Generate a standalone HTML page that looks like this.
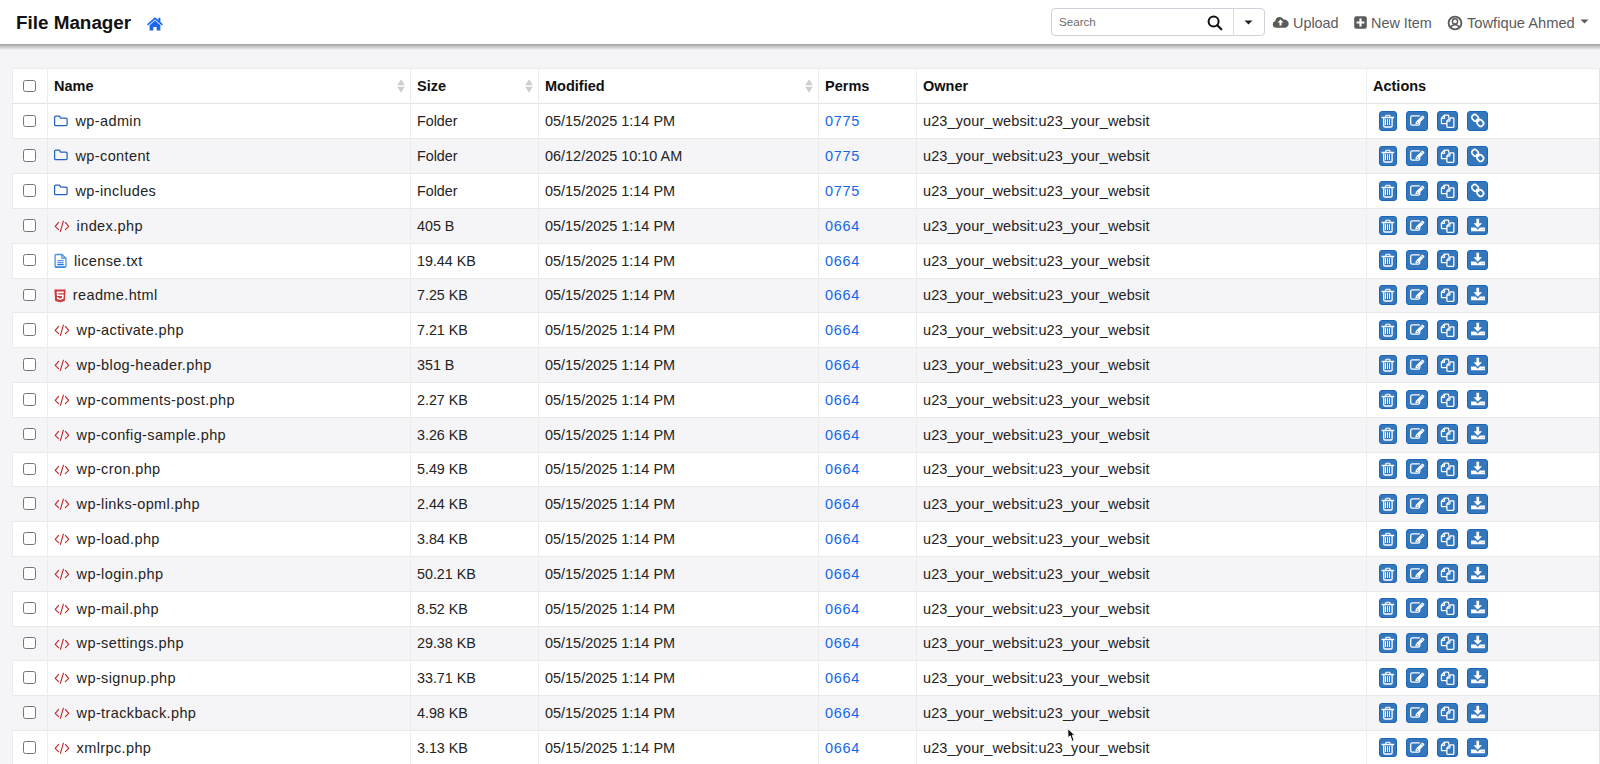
<!DOCTYPE html>
<html><head><meta charset="utf-8"><title>File Manager</title>
<style>
*{box-sizing:border-box;margin:0;padding:0}
html,body{width:1600px;height:764px;overflow:hidden}
body{background:#f5f5f7;font-family:"Liberation Sans",sans-serif;color:#232323;position:relative}
#hdr{position:absolute;left:0;top:0;width:1600px;height:44px;background:#fff}
#shd{position:absolute;left:0;top:44px;width:1600px;height:6px;background:linear-gradient(#a0a0a0,#b8b8b8 30%,#d8d8d8 65%,#f0f0f2)}
.title{position:absolute;left:16px;top:11.6px;font-size:18.85px;font-weight:bold;color:#111;line-height:22px;white-space:nowrap}
.nav{position:absolute;top:13px;font-size:14.4px;color:#5b5b5b;line-height:20px;white-space:nowrap}
#search{position:absolute;left:1051px;top:8px;width:214px;height:28px;border:1px solid #cdd3da;border-radius:4px;background:#fff}
#search .ph{position:absolute;left:7px;top:6px;font-size:11.6px;color:#6c6c6c;line-height:14px}
#search .dv{position:absolute;left:181px;top:0;width:1px;height:26px;background:#dcdfe3}
#tbl{position:absolute;left:12px;top:68px;width:1588px;height:700px;background:#fff;border:1px solid #ebebeb;border-right:1px solid #e2e2e2}
.row{position:absolute;left:12px;width:1587px;overflow:hidden}
.stp{position:absolute;left:12px;width:1587px;background:#f5f5f7}
.c{position:absolute;top:0.9px;white-space:nowrap;font-size:14.5px}
.nm{letter-spacing:0.38px}
.sz{font-size:14.3px}
.dt{font-size:14.45px}
.ow{letter-spacing:0.11px}
.th{font-weight:bold;color:#111}
.vl{position:absolute;top:68px;width:1px;height:700px;background:#ededed}
.hl{position:absolute;left:12px;width:1587px;height:1px;background:#e9e9e9}
.cb{position:absolute;left:11.3px;width:12.8px;height:12.8px;border:1px solid #767676;border-radius:2.5px;background:#fff}
.fi{position:absolute;left:38px;top:8px}
.bt{position:absolute;top:7.8px;height:19.7px;background:#3577bd;border:1px solid #1c66b6;border-radius:3px}
.bt svg{position:absolute;left:-1px;top:-1px}
.perm{color:#1467e8;letter-spacing:0.7px}
.sort{position:absolute;top:10.5px;width:8px;height:14px}.sort svg{display:block}
</style></head><body>
<div id="hdr"></div><div id="shd"></div>
<div class="title">File Manager</div>
<svg style="position:absolute;left:146px;top:16px" width="18" height="15" viewBox="0 0 18 15"><path d="M9 1.2L1 8.2l1.1 1.2L9 3.4l6.9 6 1.1-1.2-2.6-2.3V1.7h-2v2.4z" fill="#1b66f0"/><path d="M3.6 9.3L9 4.6l5.4 4.7v5.1H10.7v-3.5H7.3v3.5H3.6z" fill="#1b66f0"/></svg>
<div id="search"><div class="ph">Search</div>
<svg style="position:absolute;left:155px;top:6px" width="16" height="16" viewBox="0 0 16 16"><circle cx="6.6" cy="6.6" r="5" fill="none" stroke="#111" stroke-width="2"/><path d="M10.3 10.3l4 4" stroke="#111" stroke-width="2.2" stroke-linecap="round"/></svg>
<div class="dv"></div>
<svg style="position:absolute;left:192px;top:11px" width="9" height="5" viewBox="0 0 9 5"><path d="M0.5 0.5h8L4.5 4.6z" fill="#222"/></svg>
</div>
<svg style="position:absolute;left:1272px;top:15px" width="17" height="14" viewBox="0 0 17 14"><path d="M4 12.8a3.4 3.4 0 0 1-0.6-6.7A4.3 4.3 0 0 1 11.6 4.5a3.8 3.8 0 0 1 1.6 8.3z" fill="#5b5b5b"/><path d="M8.5 4.6l-3 3h2v3h2v-3h2z" fill="#fff"/></svg>
<div class="nav" style="left:1293px">Upload</div>
<svg style="position:absolute;left:1354px;top:16px" width="13" height="13" viewBox="0 0 13 13"><rect x="0.2" y="0.2" width="12.6" height="12.6" rx="2" fill="#5b5b5b"/><path d="M6.5 2.6v7.8M2.6 6.5h7.8" stroke="#fff" stroke-width="2.2"/></svg>
<div class="nav" style="left:1371px">New Item</div>
<svg style="position:absolute;left:1447px;top:15px" width="16" height="16" viewBox="0 0 16 16"><circle cx="8" cy="8" r="6.4" fill="none" stroke="#5b5b5b" stroke-width="1.9"/><circle cx="8" cy="6.4" r="2.6" fill="none" stroke="#5b5b5b" stroke-width="1.5"/><path d="M3.6 12.6c1-2 2.6-2.8 4.4-2.8s3.4 0.8 4.4 2.8" fill="none" stroke="#5b5b5b" stroke-width="1.5"/></svg>
<div class="nav" style="left:1467px;font-size:14.7px">Towfique Ahmed</div>
<svg style="position:absolute;left:1580px;top:19px" width="9" height="5" viewBox="0 0 9 5"><path d="M0.5 0.5h8L4.5 4.6z" fill="#5b5b5b"/></svg>
<div id="tbl"></div>

<div class="stp" style="top:139px;height:34px"></div>
<div class="stp" style="top:209px;height:34px"></div>
<div class="stp" style="top:279px;height:33px"></div>
<div class="stp" style="top:348px;height:34px"></div>
<div class="stp" style="top:418px;height:34px"></div>
<div class="stp" style="top:487px;height:34px"></div>
<div class="stp" style="top:557px;height:34px"></div>
<div class="stp" style="top:627px;height:33px"></div>
<div class="stp" style="top:696px;height:34px"></div>
<div class="row" style="top:68.5px;height:35px;line-height:35px">
<div class="cb" style="top:11.2px"></div>
<div class="c th" style="left:42px">Name</div>
<div class="c th" style="left:405px">Size</div>
<div class="c th" style="left:533px">Modified</div>
<div class="c th" style="left:813px">Perms</div>
<div class="c th" style="left:911px">Owner</div>
<div class="c th" style="left:1361px">Actions</div>
<div class="sort" style="left:385px"><svg width="8" height="14" viewBox="0 0 8 14"><path d="M4 0.3L7.7 6.3H0.3z" fill="#cdcdcd"/><path d="M4 13.7L7.7 7.7H0.3z" fill="#cdcdcd"/></svg></div>
<div class="sort" style="left:513px"><svg width="8" height="14" viewBox="0 0 8 14"><path d="M4 0.3L7.7 6.3H0.3z" fill="#cdcdcd"/><path d="M4 13.7L7.7 7.7H0.3z" fill="#cdcdcd"/></svg></div>
<div class="sort" style="left:793px"><svg width="8" height="14" viewBox="0 0 8 14"><path d="M4 0.3L7.7 6.3H0.3z" fill="#cdcdcd"/><path d="M4 13.7L7.7 7.7H0.3z" fill="#cdcdcd"/></svg></div>
</div>
<div class="row" style="top:103.50px;height:34.8px;line-height:34.8px">
<div class="cb" style="top:11px"></div>
<svg class="fi" width="24" height="20" viewBox="0 0 24 20"><path d="M5.8 4H9.5l1.1 2.1H16a1.1 1.1 0 0 1 1.1 1.1v5.4a1.1 1.1 0 0 1-1.1 1.1H5.7a1.1 1.1 0 0 1-1.1-1.1V5.2A1.2 1.2 0 0 1 5.8 4z" fill="none" stroke="#2561c0" stroke-width="1.25" stroke-linejoin="round"/></svg>
<div class="c nm" style="left:63.5px">wp-admin</div>
<div class="c sz" style="left:405px">Folder</div>
<div class="c dt" style="left:533px">05/15/2025 1:14 PM</div>
<div class="c perm" style="left:813px">0775</div>
<div class="c ow" style="left:911px">u23_your_websit:u23_your_websit</div>
<div class="bt" style="left:1367px;width:18px"><svg width="18" height="20" viewBox="0 0 18 20"><path d="M6.7 6.2V5.1a0.8 0.8 0 0 1 0.8-0.8h2.7a0.8 0.8 0 0 1 0.8 0.8v1.1" fill="none" stroke="#fff" stroke-width="1.1"/><path d="M3.1 6.5H14.6" stroke="#fff" stroke-width="1.4" stroke-linecap="round"/><path d="M4.75 7V14.8a1.2 1.2 0 0 0 1.2 1.2H11.9a1.2 1.2 0 0 0 1.2-1.2V7" fill="none" stroke="#fff" stroke-width="1.3"/><path d="M6.5 8.2V14M8.5 8.2V14M10.5 8.2V14" stroke="#fff" stroke-width="1.0"/></svg></div>
<div class="bt" style="left:1394px;width:22px"><svg width="22" height="20" viewBox="0 0 22 20"><path d="M13.4 4.85H6.3a1.6 1.6 0 0 0-1.6 1.6V12.5a1.6 1.6 0 0 0 1.6 1.6H12.2a1.6 1.6 0 0 0 1.6-1.6V11.6" fill="none" stroke="#fff" stroke-width="1.3" stroke-linecap="round"/><path d="M9.3 13.2L9.9 10.7 15.7 4.9a1 1 0 0 1 1.4 0l1 1a1 1 0 0 1 0 1.4L12.3 13.1z" fill="#fff"/><path d="M10.7 10.8l1.6 1.6M15.5 6.1l1.5 1.5" stroke="#3577bd" stroke-width="0.7"/></svg></div>
<div class="bt" style="left:1425px;width:21px"><svg width="21" height="20" viewBox="0 0 21 20"><path d="M9.9 12.65H5.25a0.8 0.8 0 0 1-0.8-0.8V7.2L7.6 4.05H10.8a0.8 0.8 0 0 1 0.8 0.8V6.85" fill="none" stroke="#fff" stroke-width="1.3" stroke-linejoin="round"/><path d="M7.6 4.2V6.9a0.5 0.5 0 0 1-0.5 0.5H4.55" fill="none" stroke="#fff" stroke-width="1.1"/><path d="M13 6.85H16.05a0.8 0.8 0 0 1 0.8 0.8V15.5a0.8 0.8 0 0 1-0.8 0.8H10.7a0.8 0.8 0 0 1-0.8-0.8V10z" fill="none" stroke="#fff" stroke-width="1.3" stroke-linejoin="round"/><path d="M13 7V9.6a0.5 0.5 0 0 1-0.5 0.5H10" fill="none" stroke="#fff" stroke-width="1.1"/></svg></div>
<div class="bt" style="left:1455px;width:21px"><svg width="21" height="20" viewBox="0 0 21 20"><g transform="rotate(-45 10.7 9.4)"><rect x="7.9" y="2.4" width="5.6" height="6.6" rx="2.5" fill="none" stroke="#fff" stroke-width="1.7"/><rect x="7.9" y="9.8" width="5.6" height="6.6" rx="2.5" fill="none" stroke="#fff" stroke-width="1.7"/><path d="M10.7 7.4V11.4" stroke="#fff" stroke-width="1.5"/></g></svg></div>
</div>
<div class="row s" style="top:138.30px;height:34.8px;line-height:34.8px">
<div class="cb" style="top:11px"></div>
<svg class="fi" width="24" height="20" viewBox="0 0 24 20"><path d="M5.8 4H9.5l1.1 2.1H16a1.1 1.1 0 0 1 1.1 1.1v5.4a1.1 1.1 0 0 1-1.1 1.1H5.7a1.1 1.1 0 0 1-1.1-1.1V5.2A1.2 1.2 0 0 1 5.8 4z" fill="none" stroke="#2561c0" stroke-width="1.25" stroke-linejoin="round"/></svg>
<div class="c nm" style="left:63.5px">wp-content</div>
<div class="c sz" style="left:405px">Folder</div>
<div class="c dt" style="left:533px">06/12/2025 10:10 AM</div>
<div class="c perm" style="left:813px">0775</div>
<div class="c ow" style="left:911px">u23_your_websit:u23_your_websit</div>
<div class="bt" style="left:1367px;width:18px"><svg width="18" height="20" viewBox="0 0 18 20"><path d="M6.7 6.2V5.1a0.8 0.8 0 0 1 0.8-0.8h2.7a0.8 0.8 0 0 1 0.8 0.8v1.1" fill="none" stroke="#fff" stroke-width="1.1"/><path d="M3.1 6.5H14.6" stroke="#fff" stroke-width="1.4" stroke-linecap="round"/><path d="M4.75 7V14.8a1.2 1.2 0 0 0 1.2 1.2H11.9a1.2 1.2 0 0 0 1.2-1.2V7" fill="none" stroke="#fff" stroke-width="1.3"/><path d="M6.5 8.2V14M8.5 8.2V14M10.5 8.2V14" stroke="#fff" stroke-width="1.0"/></svg></div>
<div class="bt" style="left:1394px;width:22px"><svg width="22" height="20" viewBox="0 0 22 20"><path d="M13.4 4.85H6.3a1.6 1.6 0 0 0-1.6 1.6V12.5a1.6 1.6 0 0 0 1.6 1.6H12.2a1.6 1.6 0 0 0 1.6-1.6V11.6" fill="none" stroke="#fff" stroke-width="1.3" stroke-linecap="round"/><path d="M9.3 13.2L9.9 10.7 15.7 4.9a1 1 0 0 1 1.4 0l1 1a1 1 0 0 1 0 1.4L12.3 13.1z" fill="#fff"/><path d="M10.7 10.8l1.6 1.6M15.5 6.1l1.5 1.5" stroke="#3577bd" stroke-width="0.7"/></svg></div>
<div class="bt" style="left:1425px;width:21px"><svg width="21" height="20" viewBox="0 0 21 20"><path d="M9.9 12.65H5.25a0.8 0.8 0 0 1-0.8-0.8V7.2L7.6 4.05H10.8a0.8 0.8 0 0 1 0.8 0.8V6.85" fill="none" stroke="#fff" stroke-width="1.3" stroke-linejoin="round"/><path d="M7.6 4.2V6.9a0.5 0.5 0 0 1-0.5 0.5H4.55" fill="none" stroke="#fff" stroke-width="1.1"/><path d="M13 6.85H16.05a0.8 0.8 0 0 1 0.8 0.8V15.5a0.8 0.8 0 0 1-0.8 0.8H10.7a0.8 0.8 0 0 1-0.8-0.8V10z" fill="none" stroke="#fff" stroke-width="1.3" stroke-linejoin="round"/><path d="M13 7V9.6a0.5 0.5 0 0 1-0.5 0.5H10" fill="none" stroke="#fff" stroke-width="1.1"/></svg></div>
<div class="bt" style="left:1455px;width:21px"><svg width="21" height="20" viewBox="0 0 21 20"><g transform="rotate(-45 10.7 9.4)"><rect x="7.9" y="2.4" width="5.6" height="6.6" rx="2.5" fill="none" stroke="#fff" stroke-width="1.7"/><rect x="7.9" y="9.8" width="5.6" height="6.6" rx="2.5" fill="none" stroke="#fff" stroke-width="1.7"/><path d="M10.7 7.4V11.4" stroke="#fff" stroke-width="1.5"/></g></svg></div>
</div>
<div class="row" style="top:173.10px;height:34.8px;line-height:34.8px">
<div class="cb" style="top:11px"></div>
<svg class="fi" width="24" height="20" viewBox="0 0 24 20"><path d="M5.8 4H9.5l1.1 2.1H16a1.1 1.1 0 0 1 1.1 1.1v5.4a1.1 1.1 0 0 1-1.1 1.1H5.7a1.1 1.1 0 0 1-1.1-1.1V5.2A1.2 1.2 0 0 1 5.8 4z" fill="none" stroke="#2561c0" stroke-width="1.25" stroke-linejoin="round"/></svg>
<div class="c nm" style="left:63.5px">wp-includes</div>
<div class="c sz" style="left:405px">Folder</div>
<div class="c dt" style="left:533px">05/15/2025 1:14 PM</div>
<div class="c perm" style="left:813px">0775</div>
<div class="c ow" style="left:911px">u23_your_websit:u23_your_websit</div>
<div class="bt" style="left:1367px;width:18px"><svg width="18" height="20" viewBox="0 0 18 20"><path d="M6.7 6.2V5.1a0.8 0.8 0 0 1 0.8-0.8h2.7a0.8 0.8 0 0 1 0.8 0.8v1.1" fill="none" stroke="#fff" stroke-width="1.1"/><path d="M3.1 6.5H14.6" stroke="#fff" stroke-width="1.4" stroke-linecap="round"/><path d="M4.75 7V14.8a1.2 1.2 0 0 0 1.2 1.2H11.9a1.2 1.2 0 0 0 1.2-1.2V7" fill="none" stroke="#fff" stroke-width="1.3"/><path d="M6.5 8.2V14M8.5 8.2V14M10.5 8.2V14" stroke="#fff" stroke-width="1.0"/></svg></div>
<div class="bt" style="left:1394px;width:22px"><svg width="22" height="20" viewBox="0 0 22 20"><path d="M13.4 4.85H6.3a1.6 1.6 0 0 0-1.6 1.6V12.5a1.6 1.6 0 0 0 1.6 1.6H12.2a1.6 1.6 0 0 0 1.6-1.6V11.6" fill="none" stroke="#fff" stroke-width="1.3" stroke-linecap="round"/><path d="M9.3 13.2L9.9 10.7 15.7 4.9a1 1 0 0 1 1.4 0l1 1a1 1 0 0 1 0 1.4L12.3 13.1z" fill="#fff"/><path d="M10.7 10.8l1.6 1.6M15.5 6.1l1.5 1.5" stroke="#3577bd" stroke-width="0.7"/></svg></div>
<div class="bt" style="left:1425px;width:21px"><svg width="21" height="20" viewBox="0 0 21 20"><path d="M9.9 12.65H5.25a0.8 0.8 0 0 1-0.8-0.8V7.2L7.6 4.05H10.8a0.8 0.8 0 0 1 0.8 0.8V6.85" fill="none" stroke="#fff" stroke-width="1.3" stroke-linejoin="round"/><path d="M7.6 4.2V6.9a0.5 0.5 0 0 1-0.5 0.5H4.55" fill="none" stroke="#fff" stroke-width="1.1"/><path d="M13 6.85H16.05a0.8 0.8 0 0 1 0.8 0.8V15.5a0.8 0.8 0 0 1-0.8 0.8H10.7a0.8 0.8 0 0 1-0.8-0.8V10z" fill="none" stroke="#fff" stroke-width="1.3" stroke-linejoin="round"/><path d="M13 7V9.6a0.5 0.5 0 0 1-0.5 0.5H10" fill="none" stroke="#fff" stroke-width="1.1"/></svg></div>
<div class="bt" style="left:1455px;width:21px"><svg width="21" height="20" viewBox="0 0 21 20"><g transform="rotate(-45 10.7 9.4)"><rect x="7.9" y="2.4" width="5.6" height="6.6" rx="2.5" fill="none" stroke="#fff" stroke-width="1.7"/><rect x="7.9" y="9.8" width="5.6" height="6.6" rx="2.5" fill="none" stroke="#fff" stroke-width="1.7"/><path d="M10.7 7.4V11.4" stroke="#fff" stroke-width="1.5"/></g></svg></div>
</div>
<div class="row s" style="top:207.90px;height:34.8px;line-height:34.8px">
<div class="cb" style="top:11px"></div>
<svg class="fi" width="24" height="20" viewBox="0 0 24 20"><path d="M8.6 6.45L5.2 10.3 8.5 13.65M15.4 6.45L18.7 10.4 15.4 13.65M13.4 5.2L10.4 15.4" fill="none" stroke="#c02a2f" stroke-width="1.15" stroke-linecap="round" stroke-linejoin="round"/></svg>
<div class="c nm" style="left:64.6px">index.php</div>
<div class="c sz" style="left:405px">405 B</div>
<div class="c dt" style="left:533px">05/15/2025 1:14 PM</div>
<div class="c perm" style="left:813px">0664</div>
<div class="c ow" style="left:911px">u23_your_websit:u23_your_websit</div>
<div class="bt" style="left:1367px;width:18px"><svg width="18" height="20" viewBox="0 0 18 20"><path d="M6.7 6.2V5.1a0.8 0.8 0 0 1 0.8-0.8h2.7a0.8 0.8 0 0 1 0.8 0.8v1.1" fill="none" stroke="#fff" stroke-width="1.1"/><path d="M3.1 6.5H14.6" stroke="#fff" stroke-width="1.4" stroke-linecap="round"/><path d="M4.75 7V14.8a1.2 1.2 0 0 0 1.2 1.2H11.9a1.2 1.2 0 0 0 1.2-1.2V7" fill="none" stroke="#fff" stroke-width="1.3"/><path d="M6.5 8.2V14M8.5 8.2V14M10.5 8.2V14" stroke="#fff" stroke-width="1.0"/></svg></div>
<div class="bt" style="left:1394px;width:22px"><svg width="22" height="20" viewBox="0 0 22 20"><path d="M13.4 4.85H6.3a1.6 1.6 0 0 0-1.6 1.6V12.5a1.6 1.6 0 0 0 1.6 1.6H12.2a1.6 1.6 0 0 0 1.6-1.6V11.6" fill="none" stroke="#fff" stroke-width="1.3" stroke-linecap="round"/><path d="M9.3 13.2L9.9 10.7 15.7 4.9a1 1 0 0 1 1.4 0l1 1a1 1 0 0 1 0 1.4L12.3 13.1z" fill="#fff"/><path d="M10.7 10.8l1.6 1.6M15.5 6.1l1.5 1.5" stroke="#3577bd" stroke-width="0.7"/></svg></div>
<div class="bt" style="left:1425px;width:21px"><svg width="21" height="20" viewBox="0 0 21 20"><path d="M9.9 12.65H5.25a0.8 0.8 0 0 1-0.8-0.8V7.2L7.6 4.05H10.8a0.8 0.8 0 0 1 0.8 0.8V6.85" fill="none" stroke="#fff" stroke-width="1.3" stroke-linejoin="round"/><path d="M7.6 4.2V6.9a0.5 0.5 0 0 1-0.5 0.5H4.55" fill="none" stroke="#fff" stroke-width="1.1"/><path d="M13 6.85H16.05a0.8 0.8 0 0 1 0.8 0.8V15.5a0.8 0.8 0 0 1-0.8 0.8H10.7a0.8 0.8 0 0 1-0.8-0.8V10z" fill="none" stroke="#fff" stroke-width="1.3" stroke-linejoin="round"/><path d="M13 7V9.6a0.5 0.5 0 0 1-0.5 0.5H10" fill="none" stroke="#fff" stroke-width="1.1"/></svg></div>
<div class="bt" style="left:1455px;width:21px"><svg width="21" height="20" viewBox="0 0 21 20"><path d="M9.4 2.7H12.1V7.3H15.1L10.75 11.8 6.5 7.3H9.4z" fill="#fff"/><path d="M4 11.6H8.6L10.75 13.7 12.9 11.6H17.9V15.2H4z" fill="#fff"/><circle cx="14.9" cy="13.6" r="0.45" fill="#3577bd"/><circle cx="16.4" cy="13.6" r="0.45" fill="#3577bd"/></svg></div>
</div>
<div class="row" style="top:242.70px;height:34.8px;line-height:34.8px">
<div class="cb" style="top:11px"></div>
<svg class="fi" width="24" height="20" viewBox="0 0 24 20"><path d="M6.2 3.5H11.9L16 7.4V15a1.1 1.1 0 0 1-1.1 1.1H6.2A1.1 1.1 0 0 1 5.1 15V4.6A1.1 1.1 0 0 1 6.2 3.5z" fill="#fff" stroke="#4a90e2" stroke-width="1.3" stroke-linejoin="round"/><path d="M11.9 3.6V7.2H15.9" fill="none" stroke="#3f88de" stroke-width="1.2"/><path d="M5.3 16.1H15.2" stroke="#1f7ae0" stroke-width="1.2"/><path d="M7.8 9.7H13.3M7.8 11.75H13.3M7.8 13.65H13.3" stroke="#1f7ae0" stroke-width="1.15" stroke-linecap="round"/></svg>
<div class="c nm" style="left:62px">license.txt</div>
<div class="c sz" style="left:405px">19.44 KB</div>
<div class="c dt" style="left:533px">05/15/2025 1:14 PM</div>
<div class="c perm" style="left:813px">0664</div>
<div class="c ow" style="left:911px">u23_your_websit:u23_your_websit</div>
<div class="bt" style="left:1367px;width:18px"><svg width="18" height="20" viewBox="0 0 18 20"><path d="M6.7 6.2V5.1a0.8 0.8 0 0 1 0.8-0.8h2.7a0.8 0.8 0 0 1 0.8 0.8v1.1" fill="none" stroke="#fff" stroke-width="1.1"/><path d="M3.1 6.5H14.6" stroke="#fff" stroke-width="1.4" stroke-linecap="round"/><path d="M4.75 7V14.8a1.2 1.2 0 0 0 1.2 1.2H11.9a1.2 1.2 0 0 0 1.2-1.2V7" fill="none" stroke="#fff" stroke-width="1.3"/><path d="M6.5 8.2V14M8.5 8.2V14M10.5 8.2V14" stroke="#fff" stroke-width="1.0"/></svg></div>
<div class="bt" style="left:1394px;width:22px"><svg width="22" height="20" viewBox="0 0 22 20"><path d="M13.4 4.85H6.3a1.6 1.6 0 0 0-1.6 1.6V12.5a1.6 1.6 0 0 0 1.6 1.6H12.2a1.6 1.6 0 0 0 1.6-1.6V11.6" fill="none" stroke="#fff" stroke-width="1.3" stroke-linecap="round"/><path d="M9.3 13.2L9.9 10.7 15.7 4.9a1 1 0 0 1 1.4 0l1 1a1 1 0 0 1 0 1.4L12.3 13.1z" fill="#fff"/><path d="M10.7 10.8l1.6 1.6M15.5 6.1l1.5 1.5" stroke="#3577bd" stroke-width="0.7"/></svg></div>
<div class="bt" style="left:1425px;width:21px"><svg width="21" height="20" viewBox="0 0 21 20"><path d="M9.9 12.65H5.25a0.8 0.8 0 0 1-0.8-0.8V7.2L7.6 4.05H10.8a0.8 0.8 0 0 1 0.8 0.8V6.85" fill="none" stroke="#fff" stroke-width="1.3" stroke-linejoin="round"/><path d="M7.6 4.2V6.9a0.5 0.5 0 0 1-0.5 0.5H4.55" fill="none" stroke="#fff" stroke-width="1.1"/><path d="M13 6.85H16.05a0.8 0.8 0 0 1 0.8 0.8V15.5a0.8 0.8 0 0 1-0.8 0.8H10.7a0.8 0.8 0 0 1-0.8-0.8V10z" fill="none" stroke="#fff" stroke-width="1.3" stroke-linejoin="round"/><path d="M13 7V9.6a0.5 0.5 0 0 1-0.5 0.5H10" fill="none" stroke="#fff" stroke-width="1.1"/></svg></div>
<div class="bt" style="left:1455px;width:21px"><svg width="21" height="20" viewBox="0 0 21 20"><path d="M9.4 2.7H12.1V7.3H15.1L10.75 11.8 6.5 7.3H9.4z" fill="#fff"/><path d="M4 11.6H8.6L10.75 13.7 12.9 11.6H17.9V15.2H4z" fill="#fff"/><circle cx="14.9" cy="13.6" r="0.45" fill="#3577bd"/><circle cx="16.4" cy="13.6" r="0.45" fill="#3577bd"/></svg></div>
</div>
<div class="row s" style="top:277.50px;height:34.8px;line-height:34.8px">
<div class="cb" style="top:11px"></div>
<svg class="fi" width="24" height="20" viewBox="0 0 24 20"><path d="M4.4 3.5H15.6L14.8 15.1 10 16.3 5.2 15.1z" fill="#d0343c"/><path d="M6.7 5.6H13.8V7.2H8.3V8.5H13.8L13.5 12.8 10 13.9 6.9 13V10.9H8.5V12L10 12.4 11.9 11.9V10.1H6.9z" fill="#fff"/></svg>
<div class="c nm" style="left:60.8px">readme.html</div>
<div class="c sz" style="left:405px">7.25 KB</div>
<div class="c dt" style="left:533px">05/15/2025 1:14 PM</div>
<div class="c perm" style="left:813px">0664</div>
<div class="c ow" style="left:911px">u23_your_websit:u23_your_websit</div>
<div class="bt" style="left:1367px;width:18px"><svg width="18" height="20" viewBox="0 0 18 20"><path d="M6.7 6.2V5.1a0.8 0.8 0 0 1 0.8-0.8h2.7a0.8 0.8 0 0 1 0.8 0.8v1.1" fill="none" stroke="#fff" stroke-width="1.1"/><path d="M3.1 6.5H14.6" stroke="#fff" stroke-width="1.4" stroke-linecap="round"/><path d="M4.75 7V14.8a1.2 1.2 0 0 0 1.2 1.2H11.9a1.2 1.2 0 0 0 1.2-1.2V7" fill="none" stroke="#fff" stroke-width="1.3"/><path d="M6.5 8.2V14M8.5 8.2V14M10.5 8.2V14" stroke="#fff" stroke-width="1.0"/></svg></div>
<div class="bt" style="left:1394px;width:22px"><svg width="22" height="20" viewBox="0 0 22 20"><path d="M13.4 4.85H6.3a1.6 1.6 0 0 0-1.6 1.6V12.5a1.6 1.6 0 0 0 1.6 1.6H12.2a1.6 1.6 0 0 0 1.6-1.6V11.6" fill="none" stroke="#fff" stroke-width="1.3" stroke-linecap="round"/><path d="M9.3 13.2L9.9 10.7 15.7 4.9a1 1 0 0 1 1.4 0l1 1a1 1 0 0 1 0 1.4L12.3 13.1z" fill="#fff"/><path d="M10.7 10.8l1.6 1.6M15.5 6.1l1.5 1.5" stroke="#3577bd" stroke-width="0.7"/></svg></div>
<div class="bt" style="left:1425px;width:21px"><svg width="21" height="20" viewBox="0 0 21 20"><path d="M9.9 12.65H5.25a0.8 0.8 0 0 1-0.8-0.8V7.2L7.6 4.05H10.8a0.8 0.8 0 0 1 0.8 0.8V6.85" fill="none" stroke="#fff" stroke-width="1.3" stroke-linejoin="round"/><path d="M7.6 4.2V6.9a0.5 0.5 0 0 1-0.5 0.5H4.55" fill="none" stroke="#fff" stroke-width="1.1"/><path d="M13 6.85H16.05a0.8 0.8 0 0 1 0.8 0.8V15.5a0.8 0.8 0 0 1-0.8 0.8H10.7a0.8 0.8 0 0 1-0.8-0.8V10z" fill="none" stroke="#fff" stroke-width="1.3" stroke-linejoin="round"/><path d="M13 7V9.6a0.5 0.5 0 0 1-0.5 0.5H10" fill="none" stroke="#fff" stroke-width="1.1"/></svg></div>
<div class="bt" style="left:1455px;width:21px"><svg width="21" height="20" viewBox="0 0 21 20"><path d="M9.4 2.7H12.1V7.3H15.1L10.75 11.8 6.5 7.3H9.4z" fill="#fff"/><path d="M4 11.6H8.6L10.75 13.7 12.9 11.6H17.9V15.2H4z" fill="#fff"/><circle cx="14.9" cy="13.6" r="0.45" fill="#3577bd"/><circle cx="16.4" cy="13.6" r="0.45" fill="#3577bd"/></svg></div>
</div>
<div class="row" style="top:312.30px;height:34.8px;line-height:34.8px">
<div class="cb" style="top:11px"></div>
<svg class="fi" width="24" height="20" viewBox="0 0 24 20"><path d="M8.6 6.45L5.2 10.3 8.5 13.65M15.4 6.45L18.7 10.4 15.4 13.65M13.4 5.2L10.4 15.4" fill="none" stroke="#c02a2f" stroke-width="1.15" stroke-linecap="round" stroke-linejoin="round"/></svg>
<div class="c nm" style="left:64.6px">wp-activate.php</div>
<div class="c sz" style="left:405px">7.21 KB</div>
<div class="c dt" style="left:533px">05/15/2025 1:14 PM</div>
<div class="c perm" style="left:813px">0664</div>
<div class="c ow" style="left:911px">u23_your_websit:u23_your_websit</div>
<div class="bt" style="left:1367px;width:18px"><svg width="18" height="20" viewBox="0 0 18 20"><path d="M6.7 6.2V5.1a0.8 0.8 0 0 1 0.8-0.8h2.7a0.8 0.8 0 0 1 0.8 0.8v1.1" fill="none" stroke="#fff" stroke-width="1.1"/><path d="M3.1 6.5H14.6" stroke="#fff" stroke-width="1.4" stroke-linecap="round"/><path d="M4.75 7V14.8a1.2 1.2 0 0 0 1.2 1.2H11.9a1.2 1.2 0 0 0 1.2-1.2V7" fill="none" stroke="#fff" stroke-width="1.3"/><path d="M6.5 8.2V14M8.5 8.2V14M10.5 8.2V14" stroke="#fff" stroke-width="1.0"/></svg></div>
<div class="bt" style="left:1394px;width:22px"><svg width="22" height="20" viewBox="0 0 22 20"><path d="M13.4 4.85H6.3a1.6 1.6 0 0 0-1.6 1.6V12.5a1.6 1.6 0 0 0 1.6 1.6H12.2a1.6 1.6 0 0 0 1.6-1.6V11.6" fill="none" stroke="#fff" stroke-width="1.3" stroke-linecap="round"/><path d="M9.3 13.2L9.9 10.7 15.7 4.9a1 1 0 0 1 1.4 0l1 1a1 1 0 0 1 0 1.4L12.3 13.1z" fill="#fff"/><path d="M10.7 10.8l1.6 1.6M15.5 6.1l1.5 1.5" stroke="#3577bd" stroke-width="0.7"/></svg></div>
<div class="bt" style="left:1425px;width:21px"><svg width="21" height="20" viewBox="0 0 21 20"><path d="M9.9 12.65H5.25a0.8 0.8 0 0 1-0.8-0.8V7.2L7.6 4.05H10.8a0.8 0.8 0 0 1 0.8 0.8V6.85" fill="none" stroke="#fff" stroke-width="1.3" stroke-linejoin="round"/><path d="M7.6 4.2V6.9a0.5 0.5 0 0 1-0.5 0.5H4.55" fill="none" stroke="#fff" stroke-width="1.1"/><path d="M13 6.85H16.05a0.8 0.8 0 0 1 0.8 0.8V15.5a0.8 0.8 0 0 1-0.8 0.8H10.7a0.8 0.8 0 0 1-0.8-0.8V10z" fill="none" stroke="#fff" stroke-width="1.3" stroke-linejoin="round"/><path d="M13 7V9.6a0.5 0.5 0 0 1-0.5 0.5H10" fill="none" stroke="#fff" stroke-width="1.1"/></svg></div>
<div class="bt" style="left:1455px;width:21px"><svg width="21" height="20" viewBox="0 0 21 20"><path d="M9.4 2.7H12.1V7.3H15.1L10.75 11.8 6.5 7.3H9.4z" fill="#fff"/><path d="M4 11.6H8.6L10.75 13.7 12.9 11.6H17.9V15.2H4z" fill="#fff"/><circle cx="14.9" cy="13.6" r="0.45" fill="#3577bd"/><circle cx="16.4" cy="13.6" r="0.45" fill="#3577bd"/></svg></div>
</div>
<div class="row s" style="top:347.10px;height:34.8px;line-height:34.8px">
<div class="cb" style="top:11px"></div>
<svg class="fi" width="24" height="20" viewBox="0 0 24 20"><path d="M8.6 6.45L5.2 10.3 8.5 13.65M15.4 6.45L18.7 10.4 15.4 13.65M13.4 5.2L10.4 15.4" fill="none" stroke="#c02a2f" stroke-width="1.15" stroke-linecap="round" stroke-linejoin="round"/></svg>
<div class="c nm" style="left:64.6px">wp-blog-header.php</div>
<div class="c sz" style="left:405px">351 B</div>
<div class="c dt" style="left:533px">05/15/2025 1:14 PM</div>
<div class="c perm" style="left:813px">0664</div>
<div class="c ow" style="left:911px">u23_your_websit:u23_your_websit</div>
<div class="bt" style="left:1367px;width:18px"><svg width="18" height="20" viewBox="0 0 18 20"><path d="M6.7 6.2V5.1a0.8 0.8 0 0 1 0.8-0.8h2.7a0.8 0.8 0 0 1 0.8 0.8v1.1" fill="none" stroke="#fff" stroke-width="1.1"/><path d="M3.1 6.5H14.6" stroke="#fff" stroke-width="1.4" stroke-linecap="round"/><path d="M4.75 7V14.8a1.2 1.2 0 0 0 1.2 1.2H11.9a1.2 1.2 0 0 0 1.2-1.2V7" fill="none" stroke="#fff" stroke-width="1.3"/><path d="M6.5 8.2V14M8.5 8.2V14M10.5 8.2V14" stroke="#fff" stroke-width="1.0"/></svg></div>
<div class="bt" style="left:1394px;width:22px"><svg width="22" height="20" viewBox="0 0 22 20"><path d="M13.4 4.85H6.3a1.6 1.6 0 0 0-1.6 1.6V12.5a1.6 1.6 0 0 0 1.6 1.6H12.2a1.6 1.6 0 0 0 1.6-1.6V11.6" fill="none" stroke="#fff" stroke-width="1.3" stroke-linecap="round"/><path d="M9.3 13.2L9.9 10.7 15.7 4.9a1 1 0 0 1 1.4 0l1 1a1 1 0 0 1 0 1.4L12.3 13.1z" fill="#fff"/><path d="M10.7 10.8l1.6 1.6M15.5 6.1l1.5 1.5" stroke="#3577bd" stroke-width="0.7"/></svg></div>
<div class="bt" style="left:1425px;width:21px"><svg width="21" height="20" viewBox="0 0 21 20"><path d="M9.9 12.65H5.25a0.8 0.8 0 0 1-0.8-0.8V7.2L7.6 4.05H10.8a0.8 0.8 0 0 1 0.8 0.8V6.85" fill="none" stroke="#fff" stroke-width="1.3" stroke-linejoin="round"/><path d="M7.6 4.2V6.9a0.5 0.5 0 0 1-0.5 0.5H4.55" fill="none" stroke="#fff" stroke-width="1.1"/><path d="M13 6.85H16.05a0.8 0.8 0 0 1 0.8 0.8V15.5a0.8 0.8 0 0 1-0.8 0.8H10.7a0.8 0.8 0 0 1-0.8-0.8V10z" fill="none" stroke="#fff" stroke-width="1.3" stroke-linejoin="round"/><path d="M13 7V9.6a0.5 0.5 0 0 1-0.5 0.5H10" fill="none" stroke="#fff" stroke-width="1.1"/></svg></div>
<div class="bt" style="left:1455px;width:21px"><svg width="21" height="20" viewBox="0 0 21 20"><path d="M9.4 2.7H12.1V7.3H15.1L10.75 11.8 6.5 7.3H9.4z" fill="#fff"/><path d="M4 11.6H8.6L10.75 13.7 12.9 11.6H17.9V15.2H4z" fill="#fff"/><circle cx="14.9" cy="13.6" r="0.45" fill="#3577bd"/><circle cx="16.4" cy="13.6" r="0.45" fill="#3577bd"/></svg></div>
</div>
<div class="row" style="top:381.90px;height:34.8px;line-height:34.8px">
<div class="cb" style="top:11px"></div>
<svg class="fi" width="24" height="20" viewBox="0 0 24 20"><path d="M8.6 6.45L5.2 10.3 8.5 13.65M15.4 6.45L18.7 10.4 15.4 13.65M13.4 5.2L10.4 15.4" fill="none" stroke="#c02a2f" stroke-width="1.15" stroke-linecap="round" stroke-linejoin="round"/></svg>
<div class="c nm" style="left:64.6px">wp-comments-post.php</div>
<div class="c sz" style="left:405px">2.27 KB</div>
<div class="c dt" style="left:533px">05/15/2025 1:14 PM</div>
<div class="c perm" style="left:813px">0664</div>
<div class="c ow" style="left:911px">u23_your_websit:u23_your_websit</div>
<div class="bt" style="left:1367px;width:18px"><svg width="18" height="20" viewBox="0 0 18 20"><path d="M6.7 6.2V5.1a0.8 0.8 0 0 1 0.8-0.8h2.7a0.8 0.8 0 0 1 0.8 0.8v1.1" fill="none" stroke="#fff" stroke-width="1.1"/><path d="M3.1 6.5H14.6" stroke="#fff" stroke-width="1.4" stroke-linecap="round"/><path d="M4.75 7V14.8a1.2 1.2 0 0 0 1.2 1.2H11.9a1.2 1.2 0 0 0 1.2-1.2V7" fill="none" stroke="#fff" stroke-width="1.3"/><path d="M6.5 8.2V14M8.5 8.2V14M10.5 8.2V14" stroke="#fff" stroke-width="1.0"/></svg></div>
<div class="bt" style="left:1394px;width:22px"><svg width="22" height="20" viewBox="0 0 22 20"><path d="M13.4 4.85H6.3a1.6 1.6 0 0 0-1.6 1.6V12.5a1.6 1.6 0 0 0 1.6 1.6H12.2a1.6 1.6 0 0 0 1.6-1.6V11.6" fill="none" stroke="#fff" stroke-width="1.3" stroke-linecap="round"/><path d="M9.3 13.2L9.9 10.7 15.7 4.9a1 1 0 0 1 1.4 0l1 1a1 1 0 0 1 0 1.4L12.3 13.1z" fill="#fff"/><path d="M10.7 10.8l1.6 1.6M15.5 6.1l1.5 1.5" stroke="#3577bd" stroke-width="0.7"/></svg></div>
<div class="bt" style="left:1425px;width:21px"><svg width="21" height="20" viewBox="0 0 21 20"><path d="M9.9 12.65H5.25a0.8 0.8 0 0 1-0.8-0.8V7.2L7.6 4.05H10.8a0.8 0.8 0 0 1 0.8 0.8V6.85" fill="none" stroke="#fff" stroke-width="1.3" stroke-linejoin="round"/><path d="M7.6 4.2V6.9a0.5 0.5 0 0 1-0.5 0.5H4.55" fill="none" stroke="#fff" stroke-width="1.1"/><path d="M13 6.85H16.05a0.8 0.8 0 0 1 0.8 0.8V15.5a0.8 0.8 0 0 1-0.8 0.8H10.7a0.8 0.8 0 0 1-0.8-0.8V10z" fill="none" stroke="#fff" stroke-width="1.3" stroke-linejoin="round"/><path d="M13 7V9.6a0.5 0.5 0 0 1-0.5 0.5H10" fill="none" stroke="#fff" stroke-width="1.1"/></svg></div>
<div class="bt" style="left:1455px;width:21px"><svg width="21" height="20" viewBox="0 0 21 20"><path d="M9.4 2.7H12.1V7.3H15.1L10.75 11.8 6.5 7.3H9.4z" fill="#fff"/><path d="M4 11.6H8.6L10.75 13.7 12.9 11.6H17.9V15.2H4z" fill="#fff"/><circle cx="14.9" cy="13.6" r="0.45" fill="#3577bd"/><circle cx="16.4" cy="13.6" r="0.45" fill="#3577bd"/></svg></div>
</div>
<div class="row s" style="top:416.70px;height:34.8px;line-height:34.8px">
<div class="cb" style="top:11px"></div>
<svg class="fi" width="24" height="20" viewBox="0 0 24 20"><path d="M8.6 6.45L5.2 10.3 8.5 13.65M15.4 6.45L18.7 10.4 15.4 13.65M13.4 5.2L10.4 15.4" fill="none" stroke="#c02a2f" stroke-width="1.15" stroke-linecap="round" stroke-linejoin="round"/></svg>
<div class="c nm" style="left:64.6px">wp-config-sample.php</div>
<div class="c sz" style="left:405px">3.26 KB</div>
<div class="c dt" style="left:533px">05/15/2025 1:14 PM</div>
<div class="c perm" style="left:813px">0664</div>
<div class="c ow" style="left:911px">u23_your_websit:u23_your_websit</div>
<div class="bt" style="left:1367px;width:18px"><svg width="18" height="20" viewBox="0 0 18 20"><path d="M6.7 6.2V5.1a0.8 0.8 0 0 1 0.8-0.8h2.7a0.8 0.8 0 0 1 0.8 0.8v1.1" fill="none" stroke="#fff" stroke-width="1.1"/><path d="M3.1 6.5H14.6" stroke="#fff" stroke-width="1.4" stroke-linecap="round"/><path d="M4.75 7V14.8a1.2 1.2 0 0 0 1.2 1.2H11.9a1.2 1.2 0 0 0 1.2-1.2V7" fill="none" stroke="#fff" stroke-width="1.3"/><path d="M6.5 8.2V14M8.5 8.2V14M10.5 8.2V14" stroke="#fff" stroke-width="1.0"/></svg></div>
<div class="bt" style="left:1394px;width:22px"><svg width="22" height="20" viewBox="0 0 22 20"><path d="M13.4 4.85H6.3a1.6 1.6 0 0 0-1.6 1.6V12.5a1.6 1.6 0 0 0 1.6 1.6H12.2a1.6 1.6 0 0 0 1.6-1.6V11.6" fill="none" stroke="#fff" stroke-width="1.3" stroke-linecap="round"/><path d="M9.3 13.2L9.9 10.7 15.7 4.9a1 1 0 0 1 1.4 0l1 1a1 1 0 0 1 0 1.4L12.3 13.1z" fill="#fff"/><path d="M10.7 10.8l1.6 1.6M15.5 6.1l1.5 1.5" stroke="#3577bd" stroke-width="0.7"/></svg></div>
<div class="bt" style="left:1425px;width:21px"><svg width="21" height="20" viewBox="0 0 21 20"><path d="M9.9 12.65H5.25a0.8 0.8 0 0 1-0.8-0.8V7.2L7.6 4.05H10.8a0.8 0.8 0 0 1 0.8 0.8V6.85" fill="none" stroke="#fff" stroke-width="1.3" stroke-linejoin="round"/><path d="M7.6 4.2V6.9a0.5 0.5 0 0 1-0.5 0.5H4.55" fill="none" stroke="#fff" stroke-width="1.1"/><path d="M13 6.85H16.05a0.8 0.8 0 0 1 0.8 0.8V15.5a0.8 0.8 0 0 1-0.8 0.8H10.7a0.8 0.8 0 0 1-0.8-0.8V10z" fill="none" stroke="#fff" stroke-width="1.3" stroke-linejoin="round"/><path d="M13 7V9.6a0.5 0.5 0 0 1-0.5 0.5H10" fill="none" stroke="#fff" stroke-width="1.1"/></svg></div>
<div class="bt" style="left:1455px;width:21px"><svg width="21" height="20" viewBox="0 0 21 20"><path d="M9.4 2.7H12.1V7.3H15.1L10.75 11.8 6.5 7.3H9.4z" fill="#fff"/><path d="M4 11.6H8.6L10.75 13.7 12.9 11.6H17.9V15.2H4z" fill="#fff"/><circle cx="14.9" cy="13.6" r="0.45" fill="#3577bd"/><circle cx="16.4" cy="13.6" r="0.45" fill="#3577bd"/></svg></div>
</div>
<div class="row" style="top:451.50px;height:34.8px;line-height:34.8px">
<div class="cb" style="top:11px"></div>
<svg class="fi" width="24" height="20" viewBox="0 0 24 20"><path d="M8.6 6.45L5.2 10.3 8.5 13.65M15.4 6.45L18.7 10.4 15.4 13.65M13.4 5.2L10.4 15.4" fill="none" stroke="#c02a2f" stroke-width="1.15" stroke-linecap="round" stroke-linejoin="round"/></svg>
<div class="c nm" style="left:64.6px">wp-cron.php</div>
<div class="c sz" style="left:405px">5.49 KB</div>
<div class="c dt" style="left:533px">05/15/2025 1:14 PM</div>
<div class="c perm" style="left:813px">0664</div>
<div class="c ow" style="left:911px">u23_your_websit:u23_your_websit</div>
<div class="bt" style="left:1367px;width:18px"><svg width="18" height="20" viewBox="0 0 18 20"><path d="M6.7 6.2V5.1a0.8 0.8 0 0 1 0.8-0.8h2.7a0.8 0.8 0 0 1 0.8 0.8v1.1" fill="none" stroke="#fff" stroke-width="1.1"/><path d="M3.1 6.5H14.6" stroke="#fff" stroke-width="1.4" stroke-linecap="round"/><path d="M4.75 7V14.8a1.2 1.2 0 0 0 1.2 1.2H11.9a1.2 1.2 0 0 0 1.2-1.2V7" fill="none" stroke="#fff" stroke-width="1.3"/><path d="M6.5 8.2V14M8.5 8.2V14M10.5 8.2V14" stroke="#fff" stroke-width="1.0"/></svg></div>
<div class="bt" style="left:1394px;width:22px"><svg width="22" height="20" viewBox="0 0 22 20"><path d="M13.4 4.85H6.3a1.6 1.6 0 0 0-1.6 1.6V12.5a1.6 1.6 0 0 0 1.6 1.6H12.2a1.6 1.6 0 0 0 1.6-1.6V11.6" fill="none" stroke="#fff" stroke-width="1.3" stroke-linecap="round"/><path d="M9.3 13.2L9.9 10.7 15.7 4.9a1 1 0 0 1 1.4 0l1 1a1 1 0 0 1 0 1.4L12.3 13.1z" fill="#fff"/><path d="M10.7 10.8l1.6 1.6M15.5 6.1l1.5 1.5" stroke="#3577bd" stroke-width="0.7"/></svg></div>
<div class="bt" style="left:1425px;width:21px"><svg width="21" height="20" viewBox="0 0 21 20"><path d="M9.9 12.65H5.25a0.8 0.8 0 0 1-0.8-0.8V7.2L7.6 4.05H10.8a0.8 0.8 0 0 1 0.8 0.8V6.85" fill="none" stroke="#fff" stroke-width="1.3" stroke-linejoin="round"/><path d="M7.6 4.2V6.9a0.5 0.5 0 0 1-0.5 0.5H4.55" fill="none" stroke="#fff" stroke-width="1.1"/><path d="M13 6.85H16.05a0.8 0.8 0 0 1 0.8 0.8V15.5a0.8 0.8 0 0 1-0.8 0.8H10.7a0.8 0.8 0 0 1-0.8-0.8V10z" fill="none" stroke="#fff" stroke-width="1.3" stroke-linejoin="round"/><path d="M13 7V9.6a0.5 0.5 0 0 1-0.5 0.5H10" fill="none" stroke="#fff" stroke-width="1.1"/></svg></div>
<div class="bt" style="left:1455px;width:21px"><svg width="21" height="20" viewBox="0 0 21 20"><path d="M9.4 2.7H12.1V7.3H15.1L10.75 11.8 6.5 7.3H9.4z" fill="#fff"/><path d="M4 11.6H8.6L10.75 13.7 12.9 11.6H17.9V15.2H4z" fill="#fff"/><circle cx="14.9" cy="13.6" r="0.45" fill="#3577bd"/><circle cx="16.4" cy="13.6" r="0.45" fill="#3577bd"/></svg></div>
</div>
<div class="row s" style="top:486.30px;height:34.8px;line-height:34.8px">
<div class="cb" style="top:11px"></div>
<svg class="fi" width="24" height="20" viewBox="0 0 24 20"><path d="M8.6 6.45L5.2 10.3 8.5 13.65M15.4 6.45L18.7 10.4 15.4 13.65M13.4 5.2L10.4 15.4" fill="none" stroke="#c02a2f" stroke-width="1.15" stroke-linecap="round" stroke-linejoin="round"/></svg>
<div class="c nm" style="left:64.6px">wp-links-opml.php</div>
<div class="c sz" style="left:405px">2.44 KB</div>
<div class="c dt" style="left:533px">05/15/2025 1:14 PM</div>
<div class="c perm" style="left:813px">0664</div>
<div class="c ow" style="left:911px">u23_your_websit:u23_your_websit</div>
<div class="bt" style="left:1367px;width:18px"><svg width="18" height="20" viewBox="0 0 18 20"><path d="M6.7 6.2V5.1a0.8 0.8 0 0 1 0.8-0.8h2.7a0.8 0.8 0 0 1 0.8 0.8v1.1" fill="none" stroke="#fff" stroke-width="1.1"/><path d="M3.1 6.5H14.6" stroke="#fff" stroke-width="1.4" stroke-linecap="round"/><path d="M4.75 7V14.8a1.2 1.2 0 0 0 1.2 1.2H11.9a1.2 1.2 0 0 0 1.2-1.2V7" fill="none" stroke="#fff" stroke-width="1.3"/><path d="M6.5 8.2V14M8.5 8.2V14M10.5 8.2V14" stroke="#fff" stroke-width="1.0"/></svg></div>
<div class="bt" style="left:1394px;width:22px"><svg width="22" height="20" viewBox="0 0 22 20"><path d="M13.4 4.85H6.3a1.6 1.6 0 0 0-1.6 1.6V12.5a1.6 1.6 0 0 0 1.6 1.6H12.2a1.6 1.6 0 0 0 1.6-1.6V11.6" fill="none" stroke="#fff" stroke-width="1.3" stroke-linecap="round"/><path d="M9.3 13.2L9.9 10.7 15.7 4.9a1 1 0 0 1 1.4 0l1 1a1 1 0 0 1 0 1.4L12.3 13.1z" fill="#fff"/><path d="M10.7 10.8l1.6 1.6M15.5 6.1l1.5 1.5" stroke="#3577bd" stroke-width="0.7"/></svg></div>
<div class="bt" style="left:1425px;width:21px"><svg width="21" height="20" viewBox="0 0 21 20"><path d="M9.9 12.65H5.25a0.8 0.8 0 0 1-0.8-0.8V7.2L7.6 4.05H10.8a0.8 0.8 0 0 1 0.8 0.8V6.85" fill="none" stroke="#fff" stroke-width="1.3" stroke-linejoin="round"/><path d="M7.6 4.2V6.9a0.5 0.5 0 0 1-0.5 0.5H4.55" fill="none" stroke="#fff" stroke-width="1.1"/><path d="M13 6.85H16.05a0.8 0.8 0 0 1 0.8 0.8V15.5a0.8 0.8 0 0 1-0.8 0.8H10.7a0.8 0.8 0 0 1-0.8-0.8V10z" fill="none" stroke="#fff" stroke-width="1.3" stroke-linejoin="round"/><path d="M13 7V9.6a0.5 0.5 0 0 1-0.5 0.5H10" fill="none" stroke="#fff" stroke-width="1.1"/></svg></div>
<div class="bt" style="left:1455px;width:21px"><svg width="21" height="20" viewBox="0 0 21 20"><path d="M9.4 2.7H12.1V7.3H15.1L10.75 11.8 6.5 7.3H9.4z" fill="#fff"/><path d="M4 11.6H8.6L10.75 13.7 12.9 11.6H17.9V15.2H4z" fill="#fff"/><circle cx="14.9" cy="13.6" r="0.45" fill="#3577bd"/><circle cx="16.4" cy="13.6" r="0.45" fill="#3577bd"/></svg></div>
</div>
<div class="row" style="top:521.10px;height:34.8px;line-height:34.8px">
<div class="cb" style="top:11px"></div>
<svg class="fi" width="24" height="20" viewBox="0 0 24 20"><path d="M8.6 6.45L5.2 10.3 8.5 13.65M15.4 6.45L18.7 10.4 15.4 13.65M13.4 5.2L10.4 15.4" fill="none" stroke="#c02a2f" stroke-width="1.15" stroke-linecap="round" stroke-linejoin="round"/></svg>
<div class="c nm" style="left:64.6px">wp-load.php</div>
<div class="c sz" style="left:405px">3.84 KB</div>
<div class="c dt" style="left:533px">05/15/2025 1:14 PM</div>
<div class="c perm" style="left:813px">0664</div>
<div class="c ow" style="left:911px">u23_your_websit:u23_your_websit</div>
<div class="bt" style="left:1367px;width:18px"><svg width="18" height="20" viewBox="0 0 18 20"><path d="M6.7 6.2V5.1a0.8 0.8 0 0 1 0.8-0.8h2.7a0.8 0.8 0 0 1 0.8 0.8v1.1" fill="none" stroke="#fff" stroke-width="1.1"/><path d="M3.1 6.5H14.6" stroke="#fff" stroke-width="1.4" stroke-linecap="round"/><path d="M4.75 7V14.8a1.2 1.2 0 0 0 1.2 1.2H11.9a1.2 1.2 0 0 0 1.2-1.2V7" fill="none" stroke="#fff" stroke-width="1.3"/><path d="M6.5 8.2V14M8.5 8.2V14M10.5 8.2V14" stroke="#fff" stroke-width="1.0"/></svg></div>
<div class="bt" style="left:1394px;width:22px"><svg width="22" height="20" viewBox="0 0 22 20"><path d="M13.4 4.85H6.3a1.6 1.6 0 0 0-1.6 1.6V12.5a1.6 1.6 0 0 0 1.6 1.6H12.2a1.6 1.6 0 0 0 1.6-1.6V11.6" fill="none" stroke="#fff" stroke-width="1.3" stroke-linecap="round"/><path d="M9.3 13.2L9.9 10.7 15.7 4.9a1 1 0 0 1 1.4 0l1 1a1 1 0 0 1 0 1.4L12.3 13.1z" fill="#fff"/><path d="M10.7 10.8l1.6 1.6M15.5 6.1l1.5 1.5" stroke="#3577bd" stroke-width="0.7"/></svg></div>
<div class="bt" style="left:1425px;width:21px"><svg width="21" height="20" viewBox="0 0 21 20"><path d="M9.9 12.65H5.25a0.8 0.8 0 0 1-0.8-0.8V7.2L7.6 4.05H10.8a0.8 0.8 0 0 1 0.8 0.8V6.85" fill="none" stroke="#fff" stroke-width="1.3" stroke-linejoin="round"/><path d="M7.6 4.2V6.9a0.5 0.5 0 0 1-0.5 0.5H4.55" fill="none" stroke="#fff" stroke-width="1.1"/><path d="M13 6.85H16.05a0.8 0.8 0 0 1 0.8 0.8V15.5a0.8 0.8 0 0 1-0.8 0.8H10.7a0.8 0.8 0 0 1-0.8-0.8V10z" fill="none" stroke="#fff" stroke-width="1.3" stroke-linejoin="round"/><path d="M13 7V9.6a0.5 0.5 0 0 1-0.5 0.5H10" fill="none" stroke="#fff" stroke-width="1.1"/></svg></div>
<div class="bt" style="left:1455px;width:21px"><svg width="21" height="20" viewBox="0 0 21 20"><path d="M9.4 2.7H12.1V7.3H15.1L10.75 11.8 6.5 7.3H9.4z" fill="#fff"/><path d="M4 11.6H8.6L10.75 13.7 12.9 11.6H17.9V15.2H4z" fill="#fff"/><circle cx="14.9" cy="13.6" r="0.45" fill="#3577bd"/><circle cx="16.4" cy="13.6" r="0.45" fill="#3577bd"/></svg></div>
</div>
<div class="row s" style="top:555.90px;height:34.8px;line-height:34.8px">
<div class="cb" style="top:11px"></div>
<svg class="fi" width="24" height="20" viewBox="0 0 24 20"><path d="M8.6 6.45L5.2 10.3 8.5 13.65M15.4 6.45L18.7 10.4 15.4 13.65M13.4 5.2L10.4 15.4" fill="none" stroke="#c02a2f" stroke-width="1.15" stroke-linecap="round" stroke-linejoin="round"/></svg>
<div class="c nm" style="left:64.6px">wp-login.php</div>
<div class="c sz" style="left:405px">50.21 KB</div>
<div class="c dt" style="left:533px">05/15/2025 1:14 PM</div>
<div class="c perm" style="left:813px">0664</div>
<div class="c ow" style="left:911px">u23_your_websit:u23_your_websit</div>
<div class="bt" style="left:1367px;width:18px"><svg width="18" height="20" viewBox="0 0 18 20"><path d="M6.7 6.2V5.1a0.8 0.8 0 0 1 0.8-0.8h2.7a0.8 0.8 0 0 1 0.8 0.8v1.1" fill="none" stroke="#fff" stroke-width="1.1"/><path d="M3.1 6.5H14.6" stroke="#fff" stroke-width="1.4" stroke-linecap="round"/><path d="M4.75 7V14.8a1.2 1.2 0 0 0 1.2 1.2H11.9a1.2 1.2 0 0 0 1.2-1.2V7" fill="none" stroke="#fff" stroke-width="1.3"/><path d="M6.5 8.2V14M8.5 8.2V14M10.5 8.2V14" stroke="#fff" stroke-width="1.0"/></svg></div>
<div class="bt" style="left:1394px;width:22px"><svg width="22" height="20" viewBox="0 0 22 20"><path d="M13.4 4.85H6.3a1.6 1.6 0 0 0-1.6 1.6V12.5a1.6 1.6 0 0 0 1.6 1.6H12.2a1.6 1.6 0 0 0 1.6-1.6V11.6" fill="none" stroke="#fff" stroke-width="1.3" stroke-linecap="round"/><path d="M9.3 13.2L9.9 10.7 15.7 4.9a1 1 0 0 1 1.4 0l1 1a1 1 0 0 1 0 1.4L12.3 13.1z" fill="#fff"/><path d="M10.7 10.8l1.6 1.6M15.5 6.1l1.5 1.5" stroke="#3577bd" stroke-width="0.7"/></svg></div>
<div class="bt" style="left:1425px;width:21px"><svg width="21" height="20" viewBox="0 0 21 20"><path d="M9.9 12.65H5.25a0.8 0.8 0 0 1-0.8-0.8V7.2L7.6 4.05H10.8a0.8 0.8 0 0 1 0.8 0.8V6.85" fill="none" stroke="#fff" stroke-width="1.3" stroke-linejoin="round"/><path d="M7.6 4.2V6.9a0.5 0.5 0 0 1-0.5 0.5H4.55" fill="none" stroke="#fff" stroke-width="1.1"/><path d="M13 6.85H16.05a0.8 0.8 0 0 1 0.8 0.8V15.5a0.8 0.8 0 0 1-0.8 0.8H10.7a0.8 0.8 0 0 1-0.8-0.8V10z" fill="none" stroke="#fff" stroke-width="1.3" stroke-linejoin="round"/><path d="M13 7V9.6a0.5 0.5 0 0 1-0.5 0.5H10" fill="none" stroke="#fff" stroke-width="1.1"/></svg></div>
<div class="bt" style="left:1455px;width:21px"><svg width="21" height="20" viewBox="0 0 21 20"><path d="M9.4 2.7H12.1V7.3H15.1L10.75 11.8 6.5 7.3H9.4z" fill="#fff"/><path d="M4 11.6H8.6L10.75 13.7 12.9 11.6H17.9V15.2H4z" fill="#fff"/><circle cx="14.9" cy="13.6" r="0.45" fill="#3577bd"/><circle cx="16.4" cy="13.6" r="0.45" fill="#3577bd"/></svg></div>
</div>
<div class="row" style="top:590.70px;height:34.8px;line-height:34.8px">
<div class="cb" style="top:11px"></div>
<svg class="fi" width="24" height="20" viewBox="0 0 24 20"><path d="M8.6 6.45L5.2 10.3 8.5 13.65M15.4 6.45L18.7 10.4 15.4 13.65M13.4 5.2L10.4 15.4" fill="none" stroke="#c02a2f" stroke-width="1.15" stroke-linecap="round" stroke-linejoin="round"/></svg>
<div class="c nm" style="left:64.6px">wp-mail.php</div>
<div class="c sz" style="left:405px">8.52 KB</div>
<div class="c dt" style="left:533px">05/15/2025 1:14 PM</div>
<div class="c perm" style="left:813px">0664</div>
<div class="c ow" style="left:911px">u23_your_websit:u23_your_websit</div>
<div class="bt" style="left:1367px;width:18px"><svg width="18" height="20" viewBox="0 0 18 20"><path d="M6.7 6.2V5.1a0.8 0.8 0 0 1 0.8-0.8h2.7a0.8 0.8 0 0 1 0.8 0.8v1.1" fill="none" stroke="#fff" stroke-width="1.1"/><path d="M3.1 6.5H14.6" stroke="#fff" stroke-width="1.4" stroke-linecap="round"/><path d="M4.75 7V14.8a1.2 1.2 0 0 0 1.2 1.2H11.9a1.2 1.2 0 0 0 1.2-1.2V7" fill="none" stroke="#fff" stroke-width="1.3"/><path d="M6.5 8.2V14M8.5 8.2V14M10.5 8.2V14" stroke="#fff" stroke-width="1.0"/></svg></div>
<div class="bt" style="left:1394px;width:22px"><svg width="22" height="20" viewBox="0 0 22 20"><path d="M13.4 4.85H6.3a1.6 1.6 0 0 0-1.6 1.6V12.5a1.6 1.6 0 0 0 1.6 1.6H12.2a1.6 1.6 0 0 0 1.6-1.6V11.6" fill="none" stroke="#fff" stroke-width="1.3" stroke-linecap="round"/><path d="M9.3 13.2L9.9 10.7 15.7 4.9a1 1 0 0 1 1.4 0l1 1a1 1 0 0 1 0 1.4L12.3 13.1z" fill="#fff"/><path d="M10.7 10.8l1.6 1.6M15.5 6.1l1.5 1.5" stroke="#3577bd" stroke-width="0.7"/></svg></div>
<div class="bt" style="left:1425px;width:21px"><svg width="21" height="20" viewBox="0 0 21 20"><path d="M9.9 12.65H5.25a0.8 0.8 0 0 1-0.8-0.8V7.2L7.6 4.05H10.8a0.8 0.8 0 0 1 0.8 0.8V6.85" fill="none" stroke="#fff" stroke-width="1.3" stroke-linejoin="round"/><path d="M7.6 4.2V6.9a0.5 0.5 0 0 1-0.5 0.5H4.55" fill="none" stroke="#fff" stroke-width="1.1"/><path d="M13 6.85H16.05a0.8 0.8 0 0 1 0.8 0.8V15.5a0.8 0.8 0 0 1-0.8 0.8H10.7a0.8 0.8 0 0 1-0.8-0.8V10z" fill="none" stroke="#fff" stroke-width="1.3" stroke-linejoin="round"/><path d="M13 7V9.6a0.5 0.5 0 0 1-0.5 0.5H10" fill="none" stroke="#fff" stroke-width="1.1"/></svg></div>
<div class="bt" style="left:1455px;width:21px"><svg width="21" height="20" viewBox="0 0 21 20"><path d="M9.4 2.7H12.1V7.3H15.1L10.75 11.8 6.5 7.3H9.4z" fill="#fff"/><path d="M4 11.6H8.6L10.75 13.7 12.9 11.6H17.9V15.2H4z" fill="#fff"/><circle cx="14.9" cy="13.6" r="0.45" fill="#3577bd"/><circle cx="16.4" cy="13.6" r="0.45" fill="#3577bd"/></svg></div>
</div>
<div class="row s" style="top:625.50px;height:34.8px;line-height:34.8px">
<div class="cb" style="top:11px"></div>
<svg class="fi" width="24" height="20" viewBox="0 0 24 20"><path d="M8.6 6.45L5.2 10.3 8.5 13.65M15.4 6.45L18.7 10.4 15.4 13.65M13.4 5.2L10.4 15.4" fill="none" stroke="#c02a2f" stroke-width="1.15" stroke-linecap="round" stroke-linejoin="round"/></svg>
<div class="c nm" style="left:64.6px">wp-settings.php</div>
<div class="c sz" style="left:405px">29.38 KB</div>
<div class="c dt" style="left:533px">05/15/2025 1:14 PM</div>
<div class="c perm" style="left:813px">0664</div>
<div class="c ow" style="left:911px">u23_your_websit:u23_your_websit</div>
<div class="bt" style="left:1367px;width:18px"><svg width="18" height="20" viewBox="0 0 18 20"><path d="M6.7 6.2V5.1a0.8 0.8 0 0 1 0.8-0.8h2.7a0.8 0.8 0 0 1 0.8 0.8v1.1" fill="none" stroke="#fff" stroke-width="1.1"/><path d="M3.1 6.5H14.6" stroke="#fff" stroke-width="1.4" stroke-linecap="round"/><path d="M4.75 7V14.8a1.2 1.2 0 0 0 1.2 1.2H11.9a1.2 1.2 0 0 0 1.2-1.2V7" fill="none" stroke="#fff" stroke-width="1.3"/><path d="M6.5 8.2V14M8.5 8.2V14M10.5 8.2V14" stroke="#fff" stroke-width="1.0"/></svg></div>
<div class="bt" style="left:1394px;width:22px"><svg width="22" height="20" viewBox="0 0 22 20"><path d="M13.4 4.85H6.3a1.6 1.6 0 0 0-1.6 1.6V12.5a1.6 1.6 0 0 0 1.6 1.6H12.2a1.6 1.6 0 0 0 1.6-1.6V11.6" fill="none" stroke="#fff" stroke-width="1.3" stroke-linecap="round"/><path d="M9.3 13.2L9.9 10.7 15.7 4.9a1 1 0 0 1 1.4 0l1 1a1 1 0 0 1 0 1.4L12.3 13.1z" fill="#fff"/><path d="M10.7 10.8l1.6 1.6M15.5 6.1l1.5 1.5" stroke="#3577bd" stroke-width="0.7"/></svg></div>
<div class="bt" style="left:1425px;width:21px"><svg width="21" height="20" viewBox="0 0 21 20"><path d="M9.9 12.65H5.25a0.8 0.8 0 0 1-0.8-0.8V7.2L7.6 4.05H10.8a0.8 0.8 0 0 1 0.8 0.8V6.85" fill="none" stroke="#fff" stroke-width="1.3" stroke-linejoin="round"/><path d="M7.6 4.2V6.9a0.5 0.5 0 0 1-0.5 0.5H4.55" fill="none" stroke="#fff" stroke-width="1.1"/><path d="M13 6.85H16.05a0.8 0.8 0 0 1 0.8 0.8V15.5a0.8 0.8 0 0 1-0.8 0.8H10.7a0.8 0.8 0 0 1-0.8-0.8V10z" fill="none" stroke="#fff" stroke-width="1.3" stroke-linejoin="round"/><path d="M13 7V9.6a0.5 0.5 0 0 1-0.5 0.5H10" fill="none" stroke="#fff" stroke-width="1.1"/></svg></div>
<div class="bt" style="left:1455px;width:21px"><svg width="21" height="20" viewBox="0 0 21 20"><path d="M9.4 2.7H12.1V7.3H15.1L10.75 11.8 6.5 7.3H9.4z" fill="#fff"/><path d="M4 11.6H8.6L10.75 13.7 12.9 11.6H17.9V15.2H4z" fill="#fff"/><circle cx="14.9" cy="13.6" r="0.45" fill="#3577bd"/><circle cx="16.4" cy="13.6" r="0.45" fill="#3577bd"/></svg></div>
</div>
<div class="row" style="top:660.30px;height:34.8px;line-height:34.8px">
<div class="cb" style="top:11px"></div>
<svg class="fi" width="24" height="20" viewBox="0 0 24 20"><path d="M8.6 6.45L5.2 10.3 8.5 13.65M15.4 6.45L18.7 10.4 15.4 13.65M13.4 5.2L10.4 15.4" fill="none" stroke="#c02a2f" stroke-width="1.15" stroke-linecap="round" stroke-linejoin="round"/></svg>
<div class="c nm" style="left:64.6px">wp-signup.php</div>
<div class="c sz" style="left:405px">33.71 KB</div>
<div class="c dt" style="left:533px">05/15/2025 1:14 PM</div>
<div class="c perm" style="left:813px">0664</div>
<div class="c ow" style="left:911px">u23_your_websit:u23_your_websit</div>
<div class="bt" style="left:1367px;width:18px"><svg width="18" height="20" viewBox="0 0 18 20"><path d="M6.7 6.2V5.1a0.8 0.8 0 0 1 0.8-0.8h2.7a0.8 0.8 0 0 1 0.8 0.8v1.1" fill="none" stroke="#fff" stroke-width="1.1"/><path d="M3.1 6.5H14.6" stroke="#fff" stroke-width="1.4" stroke-linecap="round"/><path d="M4.75 7V14.8a1.2 1.2 0 0 0 1.2 1.2H11.9a1.2 1.2 0 0 0 1.2-1.2V7" fill="none" stroke="#fff" stroke-width="1.3"/><path d="M6.5 8.2V14M8.5 8.2V14M10.5 8.2V14" stroke="#fff" stroke-width="1.0"/></svg></div>
<div class="bt" style="left:1394px;width:22px"><svg width="22" height="20" viewBox="0 0 22 20"><path d="M13.4 4.85H6.3a1.6 1.6 0 0 0-1.6 1.6V12.5a1.6 1.6 0 0 0 1.6 1.6H12.2a1.6 1.6 0 0 0 1.6-1.6V11.6" fill="none" stroke="#fff" stroke-width="1.3" stroke-linecap="round"/><path d="M9.3 13.2L9.9 10.7 15.7 4.9a1 1 0 0 1 1.4 0l1 1a1 1 0 0 1 0 1.4L12.3 13.1z" fill="#fff"/><path d="M10.7 10.8l1.6 1.6M15.5 6.1l1.5 1.5" stroke="#3577bd" stroke-width="0.7"/></svg></div>
<div class="bt" style="left:1425px;width:21px"><svg width="21" height="20" viewBox="0 0 21 20"><path d="M9.9 12.65H5.25a0.8 0.8 0 0 1-0.8-0.8V7.2L7.6 4.05H10.8a0.8 0.8 0 0 1 0.8 0.8V6.85" fill="none" stroke="#fff" stroke-width="1.3" stroke-linejoin="round"/><path d="M7.6 4.2V6.9a0.5 0.5 0 0 1-0.5 0.5H4.55" fill="none" stroke="#fff" stroke-width="1.1"/><path d="M13 6.85H16.05a0.8 0.8 0 0 1 0.8 0.8V15.5a0.8 0.8 0 0 1-0.8 0.8H10.7a0.8 0.8 0 0 1-0.8-0.8V10z" fill="none" stroke="#fff" stroke-width="1.3" stroke-linejoin="round"/><path d="M13 7V9.6a0.5 0.5 0 0 1-0.5 0.5H10" fill="none" stroke="#fff" stroke-width="1.1"/></svg></div>
<div class="bt" style="left:1455px;width:21px"><svg width="21" height="20" viewBox="0 0 21 20"><path d="M9.4 2.7H12.1V7.3H15.1L10.75 11.8 6.5 7.3H9.4z" fill="#fff"/><path d="M4 11.6H8.6L10.75 13.7 12.9 11.6H17.9V15.2H4z" fill="#fff"/><circle cx="14.9" cy="13.6" r="0.45" fill="#3577bd"/><circle cx="16.4" cy="13.6" r="0.45" fill="#3577bd"/></svg></div>
</div>
<div class="row s" style="top:695.10px;height:34.8px;line-height:34.8px">
<div class="cb" style="top:11px"></div>
<svg class="fi" width="24" height="20" viewBox="0 0 24 20"><path d="M8.6 6.45L5.2 10.3 8.5 13.65M15.4 6.45L18.7 10.4 15.4 13.65M13.4 5.2L10.4 15.4" fill="none" stroke="#c02a2f" stroke-width="1.15" stroke-linecap="round" stroke-linejoin="round"/></svg>
<div class="c nm" style="left:64.6px">wp-trackback.php</div>
<div class="c sz" style="left:405px">4.98 KB</div>
<div class="c dt" style="left:533px">05/15/2025 1:14 PM</div>
<div class="c perm" style="left:813px">0664</div>
<div class="c ow" style="left:911px">u23_your_websit:u23_your_websit</div>
<div class="bt" style="left:1367px;width:18px"><svg width="18" height="20" viewBox="0 0 18 20"><path d="M6.7 6.2V5.1a0.8 0.8 0 0 1 0.8-0.8h2.7a0.8 0.8 0 0 1 0.8 0.8v1.1" fill="none" stroke="#fff" stroke-width="1.1"/><path d="M3.1 6.5H14.6" stroke="#fff" stroke-width="1.4" stroke-linecap="round"/><path d="M4.75 7V14.8a1.2 1.2 0 0 0 1.2 1.2H11.9a1.2 1.2 0 0 0 1.2-1.2V7" fill="none" stroke="#fff" stroke-width="1.3"/><path d="M6.5 8.2V14M8.5 8.2V14M10.5 8.2V14" stroke="#fff" stroke-width="1.0"/></svg></div>
<div class="bt" style="left:1394px;width:22px"><svg width="22" height="20" viewBox="0 0 22 20"><path d="M13.4 4.85H6.3a1.6 1.6 0 0 0-1.6 1.6V12.5a1.6 1.6 0 0 0 1.6 1.6H12.2a1.6 1.6 0 0 0 1.6-1.6V11.6" fill="none" stroke="#fff" stroke-width="1.3" stroke-linecap="round"/><path d="M9.3 13.2L9.9 10.7 15.7 4.9a1 1 0 0 1 1.4 0l1 1a1 1 0 0 1 0 1.4L12.3 13.1z" fill="#fff"/><path d="M10.7 10.8l1.6 1.6M15.5 6.1l1.5 1.5" stroke="#3577bd" stroke-width="0.7"/></svg></div>
<div class="bt" style="left:1425px;width:21px"><svg width="21" height="20" viewBox="0 0 21 20"><path d="M9.9 12.65H5.25a0.8 0.8 0 0 1-0.8-0.8V7.2L7.6 4.05H10.8a0.8 0.8 0 0 1 0.8 0.8V6.85" fill="none" stroke="#fff" stroke-width="1.3" stroke-linejoin="round"/><path d="M7.6 4.2V6.9a0.5 0.5 0 0 1-0.5 0.5H4.55" fill="none" stroke="#fff" stroke-width="1.1"/><path d="M13 6.85H16.05a0.8 0.8 0 0 1 0.8 0.8V15.5a0.8 0.8 0 0 1-0.8 0.8H10.7a0.8 0.8 0 0 1-0.8-0.8V10z" fill="none" stroke="#fff" stroke-width="1.3" stroke-linejoin="round"/><path d="M13 7V9.6a0.5 0.5 0 0 1-0.5 0.5H10" fill="none" stroke="#fff" stroke-width="1.1"/></svg></div>
<div class="bt" style="left:1455px;width:21px"><svg width="21" height="20" viewBox="0 0 21 20"><path d="M9.4 2.7H12.1V7.3H15.1L10.75 11.8 6.5 7.3H9.4z" fill="#fff"/><path d="M4 11.6H8.6L10.75 13.7 12.9 11.6H17.9V15.2H4z" fill="#fff"/><circle cx="14.9" cy="13.6" r="0.45" fill="#3577bd"/><circle cx="16.4" cy="13.6" r="0.45" fill="#3577bd"/></svg></div>
</div>
<div class="row" style="top:729.90px;height:34.8px;line-height:34.8px">
<div class="cb" style="top:11px"></div>
<svg class="fi" width="24" height="20" viewBox="0 0 24 20"><path d="M8.6 6.45L5.2 10.3 8.5 13.65M15.4 6.45L18.7 10.4 15.4 13.65M13.4 5.2L10.4 15.4" fill="none" stroke="#c02a2f" stroke-width="1.15" stroke-linecap="round" stroke-linejoin="round"/></svg>
<div class="c nm" style="left:64.6px">xmlrpc.php</div>
<div class="c sz" style="left:405px">3.13 KB</div>
<div class="c dt" style="left:533px">05/15/2025 1:14 PM</div>
<div class="c perm" style="left:813px">0664</div>
<div class="c ow" style="left:911px">u23_your_websit:u23_your_websit</div>
<div class="bt" style="left:1367px;width:18px"><svg width="18" height="20" viewBox="0 0 18 20"><path d="M6.7 6.2V5.1a0.8 0.8 0 0 1 0.8-0.8h2.7a0.8 0.8 0 0 1 0.8 0.8v1.1" fill="none" stroke="#fff" stroke-width="1.1"/><path d="M3.1 6.5H14.6" stroke="#fff" stroke-width="1.4" stroke-linecap="round"/><path d="M4.75 7V14.8a1.2 1.2 0 0 0 1.2 1.2H11.9a1.2 1.2 0 0 0 1.2-1.2V7" fill="none" stroke="#fff" stroke-width="1.3"/><path d="M6.5 8.2V14M8.5 8.2V14M10.5 8.2V14" stroke="#fff" stroke-width="1.0"/></svg></div>
<div class="bt" style="left:1394px;width:22px"><svg width="22" height="20" viewBox="0 0 22 20"><path d="M13.4 4.85H6.3a1.6 1.6 0 0 0-1.6 1.6V12.5a1.6 1.6 0 0 0 1.6 1.6H12.2a1.6 1.6 0 0 0 1.6-1.6V11.6" fill="none" stroke="#fff" stroke-width="1.3" stroke-linecap="round"/><path d="M9.3 13.2L9.9 10.7 15.7 4.9a1 1 0 0 1 1.4 0l1 1a1 1 0 0 1 0 1.4L12.3 13.1z" fill="#fff"/><path d="M10.7 10.8l1.6 1.6M15.5 6.1l1.5 1.5" stroke="#3577bd" stroke-width="0.7"/></svg></div>
<div class="bt" style="left:1425px;width:21px"><svg width="21" height="20" viewBox="0 0 21 20"><path d="M9.9 12.65H5.25a0.8 0.8 0 0 1-0.8-0.8V7.2L7.6 4.05H10.8a0.8 0.8 0 0 1 0.8 0.8V6.85" fill="none" stroke="#fff" stroke-width="1.3" stroke-linejoin="round"/><path d="M7.6 4.2V6.9a0.5 0.5 0 0 1-0.5 0.5H4.55" fill="none" stroke="#fff" stroke-width="1.1"/><path d="M13 6.85H16.05a0.8 0.8 0 0 1 0.8 0.8V15.5a0.8 0.8 0 0 1-0.8 0.8H10.7a0.8 0.8 0 0 1-0.8-0.8V10z" fill="none" stroke="#fff" stroke-width="1.3" stroke-linejoin="round"/><path d="M13 7V9.6a0.5 0.5 0 0 1-0.5 0.5H10" fill="none" stroke="#fff" stroke-width="1.1"/></svg></div>
<div class="bt" style="left:1455px;width:21px"><svg width="21" height="20" viewBox="0 0 21 20"><path d="M9.4 2.7H12.1V7.3H15.1L10.75 11.8 6.5 7.3H9.4z" fill="#fff"/><path d="M4 11.6H8.6L10.75 13.7 12.9 11.6H17.9V15.2H4z" fill="#fff"/><circle cx="14.9" cy="13.6" r="0.45" fill="#3577bd"/><circle cx="16.4" cy="13.6" r="0.45" fill="#3577bd"/></svg></div>
</div>
<div class="hl" style="top:103px;background:#e2e2e2"></div>
<div class="hl" style="top:138px"></div>
<div class="hl" style="top:173px"></div>
<div class="hl" style="top:208px"></div>
<div class="hl" style="top:243px"></div>
<div class="hl" style="top:278px"></div>
<div class="hl" style="top:312px"></div>
<div class="hl" style="top:347px"></div>
<div class="hl" style="top:382px"></div>
<div class="hl" style="top:417px"></div>
<div class="hl" style="top:452px"></div>
<div class="hl" style="top:486px"></div>
<div class="hl" style="top:521px"></div>
<div class="hl" style="top:556px"></div>
<div class="hl" style="top:591px"></div>
<div class="hl" style="top:626px"></div>
<div class="hl" style="top:660px"></div>
<div class="hl" style="top:695px"></div>
<div class="hl" style="top:730px"></div>
<div class="vl" style="left:47px"></div>
<div class="vl" style="left:410px"></div>
<div class="vl" style="left:538px"></div>
<div class="vl" style="left:818px"></div>
<div class="vl" style="left:916px"></div>
<div class="vl" style="left:1366px"></div>
<svg style="position:absolute;left:1066px;top:727px" width="12" height="17" viewBox="0 0 12 17"><path d="M1.8 1.6L2.0 10.8 4.3 8.8 6.0 14.3 8.0 13.6 6.3 8.2 9.0 8.4z" fill="#0a0a0a" stroke="#fff" stroke-width="0.9" stroke-linejoin="round"/></svg>
</body></html>
